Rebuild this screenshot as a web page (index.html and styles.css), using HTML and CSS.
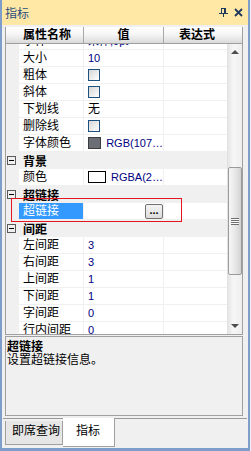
FILE: index.html
```html
<!DOCTYPE html>
<html lang="zh">
<head>
<meta charset="UTF-8">
<title>指标</title>
<link rel="stylesheet" href="styles.css">
</head>
<body>

<div class="window">
  <div class="titlebar">
    <span class="title">指标</span>
    <span class="title-buttons">
      <svg class="pin" width="9" height="9" viewBox="0 0 9 9" shape-rendering="crispEdges">
        <rect x="2" y="0" width="5" height="1" fill="#1e395b"/>
        <rect x="2" y="0" width="1" height="5" fill="#1e395b"/>
        <rect x="5" y="0" width="2" height="5" fill="#1e395b"/>
        <rect x="0" y="5" width="9" height="1" fill="#1e395b"/>
        <rect x="4" y="6" width="1" height="3" fill="#1e395b"/>
      </svg>
      <svg class="close" width="9" height="9" viewBox="0 0 9 9">
        <path d="M1 1 L8 8 M8 1 L1 8" stroke="#1e395b" stroke-width="1.8"/>
      </svg>
    </span>
  </div>

  <div class="content">
    <div class="grid">
      <div class="grid-header">
        <div class="hcell h-name">属性名称</div>
        <div class="hcell h-value">值</div>
        <div class="hcell h-expr">表达式</div>
      </div>
      <div class="grid-main">
        <div class="rows">
          <div class="rows-inner">
            <!-- row scrolled partly out of view -->
            <div class="prop">
              <div class="margin"></div><div class="name">字体</div><div class="value num">宋体,9pt</div><div class="expr"></div>
            </div>
            <div class="prop">
              <div class="margin"></div><div class="name">大小</div><div class="value num">10</div><div class="expr"></div>
            </div>
            <div class="prop">
              <div class="margin"></div><div class="name">粗体</div><div class="value"><span class="check"></span></div><div class="expr"></div>
            </div>
            <div class="prop">
              <div class="margin"></div><div class="name">斜体</div><div class="value"><span class="check"></span></div><div class="expr"></div>
            </div>
            <div class="prop">
              <div class="margin"></div><div class="name">下划线</div><div class="value">无</div><div class="expr"></div>
            </div>
            <div class="prop">
              <div class="margin"></div><div class="name">删除线</div><div class="value"><span class="check"></span></div><div class="expr"></div>
            </div>
            <div class="prop">
              <div class="margin"></div><div class="name">字体颜色</div><div class="value"><span class="swatch swatch-gray"></span><span class="num small">RGB(107…</span></div><div class="expr"></div>
            </div>

            <div class="cat"><span class="toggle"></span><span class="cat-name">背景</span></div>
            <div class="prop">
              <div class="margin"></div><div class="name">颜色</div><div class="value"><span class="swatch"></span><span class="num small">RGBA(2…</span></div><div class="expr"></div>
            </div>

            <div class="cat"><span class="toggle"></span><span class="cat-name">超链接</span></div>
            <div class="prop">
              <div class="margin"></div><div class="name selected">超链接</div><div class="value value-btn"><span class="dots">...</span></div><div class="expr"></div>
            </div>

            <div class="cat"><span class="toggle"></span><span class="cat-name">间距</span></div>
            <div class="prop">
              <div class="margin"></div><div class="name">左间距</div><div class="value num">3</div><div class="expr"></div>
            </div>
            <div class="prop">
              <div class="margin"></div><div class="name">右间距</div><div class="value num">3</div><div class="expr"></div>
            </div>
            <div class="prop">
              <div class="margin"></div><div class="name">上间距</div><div class="value num">1</div><div class="expr"></div>
            </div>
            <div class="prop">
              <div class="margin"></div><div class="name">下间距</div><div class="value num">1</div><div class="expr"></div>
            </div>
            <div class="prop">
              <div class="margin"></div><div class="name">字间距</div><div class="value num">0</div><div class="expr"></div>
            </div>
            <div class="prop">
              <div class="margin"></div><div class="name">行内间距</div><div class="value num">0</div><div class="expr"></div>
            </div>
          </div>
        </div>
        <div class="scrollbar">
          <div class="sb-btn"><span class="arrow-up"></span></div>
          <div class="sb-track">
            <div class="sb-thumb">
              <span class="grip"></span>
            </div>
          </div>
          <div class="sb-btn"><span class="arrow-down"></span></div>
        </div>
      </div>
    </div>

    <div class="desc">
      <div class="desc-title">超链接</div>
      <div class="desc-text">设置超链接信息。</div>
    </div>
  </div>

  <div class="tabs">
    <div class="tab">即席查询</div>
    <div class="tab tab-active">指标</div>
  </div>

  <!-- red highlight drawn over the selected row -->
  <div class="highlight"></div>
</div>

</body>
</html>
```

FILE: styles.css
```css
body {
  margin: 0;
  background-color: #f0f0f0;
  font-family: "Liberation Sans", "Noto Sans CJK SC", sans-serif;
  font-size: 12px;
  color: #000;
}
.window {
  position: relative;
  width: 250px;
  height: 451px;
  box-sizing: border-box;
  border-left: 2px solid #7f9dcb;
  border-right: 2px solid #7f9dcb;
  border-bottom: 3px solid #7f9dcb;
  background-color: #f0f0f0;
  display: flex;
  flex-direction: column;
}
.titlebar {
  height: 25px;
  flex: none;
  background-color: #ffe8a6;
  display: flex;
  align-items: center;
  justify-content: space-between;
  padding: 0 5px 0 3px;
}
.title {
  color: #2a4d80;
  font-size: 12px;
}
.title-buttons {
  display: flex;
  gap: 6px;
  align-items: center;
}
.title-buttons svg {
  display: block;
}

.content {
  padding: 2px 5px 0 3px;
}
.grid {
  border-left: 1px solid #a0a0a0;
  border-right: 1px solid #a0a0a0;
  border-bottom: 1px solid #a0a0a0;
  background-color: #fff;
}
.grid-header {
  display: flex;
  height: 17px;
  box-sizing: border-box;
  border-bottom: 1px solid #a0a0a0;
  background: linear-gradient(#ffffff, #f6f6f6 45%, #dadada);
  font-weight: bold;
  line-height: 16px;
}
.hcell {
  box-sizing: border-box;
  border-right: 1px solid #a9a9a9;
}
.h-name {
  width: 78px;
  padding-left: 17px;
}
.h-value {
  width: 80px;
  text-align: center;
}
.h-expr {
  flex: 1;
  padding-left: 15px;
  border-right: none;
}

.grid-main {
  display: flex;
  height: 290px;
}
.rows {
  flex: 1;
  overflow: hidden;
}
.rows-inner {
  margin-top: -11px;
}
.prop {
  display: grid;
  grid-template-columns: 13px 65px 80px 1fr;
  height: 17px;
  line-height: 16px;
}
.prop > div {
  box-sizing: border-box;
  border-bottom: 1px solid #f0f0f0;
  white-space: nowrap;
  overflow: hidden;
}
.margin {
  background-color: #f0f0f0;
}
.name {
  padding-left: 4px;
  border-right: 1px solid #f0f0f0;
}
.name.selected {
  background-color: #3399ff;
  color: #fff;
}
.value {
  padding-left: 4px;
  border-right: 1px solid #f0f0f0;
  display: flex;
  align-items: center;
}
.num {
  color: #000080;
  font-size: 11px;
}
.small {
  margin-left: 5px;
}
.check {
  width: 12px;
  height: 12px;
  box-sizing: border-box;
  border: 1px solid #1c5180;
  background: linear-gradient(135deg, #d6d6d6, #ffffff);
}
.swatch {
  width: 18px;
  height: 12px;
  box-sizing: border-box;
  border: 1px solid #000;
  background-color: #fff;
}
.swatch-gray {
  background-color: #6b6e75;
  border-color: #3c3c3c;
}
.value-btn {
  justify-content: flex-end;
  padding-right: 0;
}
.dots {
  width: 18px;
  height: 15px;
  box-sizing: border-box;
  border: 1px solid #707070;
  border-radius: 2px;
  background: linear-gradient(#f4f4f4, #dcdcdc);
  font-weight: bold;
  font-size: 11px;
  line-height: 10px;
  text-align: center;
}

.cat {
  height: 17px;
  display: flex;
  align-items: center;
  background-color: #f0f0f0;
}
.toggle {
  position: relative;
  width: 9px;
  height: 9px;
  box-sizing: border-box;
  border: 1px solid #5a5a5a;
  margin-left: 1px;
  margin-right: 7px;
}
.toggle::after {
  content: "";
  position: absolute;
  left: 1px;
  top: 3px;
  width: 5px;
  height: 1px;
  background-color: #000;
}
.cat-name {
  font-weight: bold;
}

.scrollbar {
  width: 15px;
  display: flex;
  flex-direction: column;
  background: linear-gradient(to right, #e6e6e6, #f7f7f7 40%, #eeeeee);
  border-left: 1px solid #e2e2e2;
  box-sizing: border-box;
}
.sb-btn {
  height: 17px;
  display: flex;
  align-items: center;
  justify-content: center;
}
.arrow-up {
  width: 0;
  height: 0;
  border-left: 4px solid transparent;
  border-right: 4px solid transparent;
  border-bottom: 4px solid #4d4d4d;
  margin-top: -2px;
}
.arrow-down {
  width: 0;
  height: 0;
  border-left: 4px solid transparent;
  border-right: 4px solid transparent;
  border-top: 4px solid #4d4d4d;
  margin-top: 1px;
}
.sb-track {
  flex: 1;
}
.sb-thumb {
  margin-top: 106px;
  height: 108px;
  width: 14px;
  box-sizing: border-box;
  border: 1px solid #9b9b9b;
  border-radius: 2px;
  background: linear-gradient(to right, #f6f6f6, #e4e4e4 60%, #d2d2d2);
  display: flex;
  align-items: center;
  justify-content: center;
}
.grip {
  width: 8px;
  height: 7px;
  background: repeating-linear-gradient(#6e6e6e 0, #6e6e6e 1px, #fafafa 1px, #fafafa 2px);
}

.desc {
  margin-top: 1px;
  height: 80px;
  box-sizing: border-box;
  border: 1px solid #a0a0a0;
  padding: 4px 1px;
  line-height: 13px;
}
.desc-title {
  font-weight: bold;
}

.tabs {
  display: flex;
  height: 30px;
  box-sizing: border-box;
  margin: 2px 1px 0 1px;
  border-top: 1px solid #9a9a9a;
  padding-left: 2px;
}
.tab {
  height: 24px;
  margin-top: 2px;
  width: 58px;
  box-sizing: border-box;
  border: 1px solid #a0a0a0;
  border-top: none;
  background-color: #e6e6e6;
  padding-left: 6px;
  line-height: 20px;
}
.tab-active {
  width: 52px;
  height: 29px;
  margin-top: -1px;
  background-color: #fff;
  border-left: none;
  padding-left: 13px;
  line-height: 26px;
}

.highlight {
  position: absolute;
  left: 9px;
  top: 198px;
  width: 171px;
  height: 24px;
  box-sizing: border-box;
  border: 1px solid #e3161f;
}
```
